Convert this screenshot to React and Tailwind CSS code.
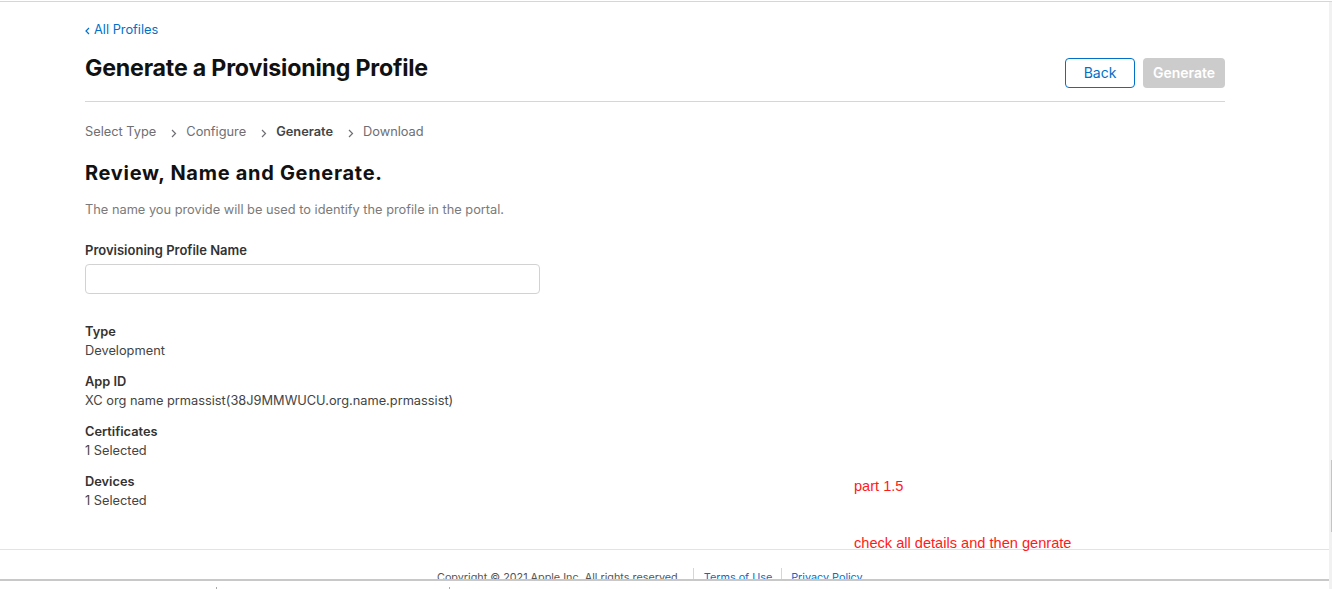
import React, { useState } from 'react';

const details = [
  { label: 'Type', value: 'Development' },
  { label: 'App ID', value: 'XC org name prmassist(38J9MMWUCU.org.name.prmassist)' },
  { label: 'Certificates', value: '1 Selected' },
  { label: 'Devices', value: '1 Selected' },
];

const steps = ['Select Type', 'Configure', 'Generate', 'Download'];

const Chevron = () => (
  <svg width="6" height="9" viewBox="0 0 6 9" className="ml-[15px] mr-[9px] mt-[3px]" fill="none">
    <path d="M1 1l3.5 3.5L1 8" stroke="#6e6e73" strokeWidth="1.2" />
  </svg>
);

const App = () => {
  const [name, setName] = useState('');

  return (
    <div className="w-[1332px] h-[589px] overflow-hidden bg-white relative font-['Inter',sans-serif]">
      <div className="h-px bg-white" />
      <div className="h-px bg-[#d6d6d6]" />
      <div className="flex h-[587px]">
        <div className="flex-1 flex flex-col">
          {/* main content */}
          <div className="h-[548px] pl-[85px]">
            <div className="w-[1140px]">
              <a href="#" className="mt-[19px] flex items-center text-[12.8px] leading-[18px] text-[#0070c9]">
                <svg width="5" height="8" viewBox="0 0 5 8" className="mr-[4px] mt-px" fill="none">
                  <path d="M4 1L1 4l3 3" stroke="#0070c9" strokeWidth="1.2" />
                </svg>
                All Profiles
              </a>

              <div className="mt-[13px] flex justify-between items-start h-[35px]">
                <h1 className="text-[23.2px] leading-[32px] font-bold text-[#111] tracking-[-0.2px]">
                  Generate a Provisioning Profile
                </h1>
                <div className="flex gap-[8px] mt-[6px]">
                  <button className="w-[70px] h-[30px] rounded-[4px] border border-[#0070c9] text-[#0070c9] text-[14px] leading-[26px]">
                    Back
                  </button>
                  <button
                    disabled
                    className="w-[82px] h-[30px] rounded-[4px] bg-[#cccccc] text-white text-[14px] leading-[26px] font-semibold"
                  >
                    Generate
                  </button>
                </div>
              </div>

              <div className="mt-[14px] h-px bg-[#d6d6d6]" />

              <div className="mt-[21px] flex items-center text-[12.8px] leading-[18px] text-[#6e6e73]">
                {steps.map((s, i) => (
                  <React.Fragment key={s}>
                    {i > 0 && <Chevron />}
                    <span className={s === 'Generate' ? 'font-semibold text-[#444]' : ''}>{s}</span>
                  </React.Fragment>
                ))}
              </div>

              <h2 className="mt-[18px] text-[20px] leading-[28px] font-bold text-[#111] tracking-[0.7px]">
                Review, Name and Generate.
              </h2>

              <p className="mt-[14px] text-[12.8px] leading-[18px] text-[#7a7a7a]">
                The name you provide will be used to identify the profile in the portal.
              </p>

              <label htmlFor="profile-name" className="mt-[22px] block text-[13px] leading-[18px] font-semibold text-[#333]">
                Provisioning Profile Name
              </label>
              <input
                id="profile-name"
                type="text"
                value={name}
                onChange={(e) => setName(e.target.value)}
                className="mt-[5px] block w-[455px] h-[30px] rounded-[4px] border border-[#d2d2d2] px-[8px] text-[13px] outline-none"
              />

              <div className="mt-[28px] flex flex-col gap-[12px]">
                {details.map((d) => (
                  <div key={d.label} className="text-[12.8px] leading-[19px]">
                    <div className="font-semibold text-[#333]">{d.label}</div>
                    <div className="text-[#444]">{d.value}</div>
                  </div>
                ))}
              </div>
            </div>
          </div>

          {/* footer */}
          <div className="h-px bg-[#e3e3e3]" />
          <div className="h-[29px] overflow-hidden">
            <div className="pt-[20px] pl-[437px] flex items-start text-[10.8px] leading-[16px]">
              <span className="text-[#555]">Copyright © 2021 Apple Inc. All rights reserved.</span>
              <span className="ml-[12px] mr-[10px] w-px h-[16px] -mt-[2px] bg-[#d6d6d6]" />
              <a href="#" className="text-[#0070c9]">Terms of Use</a>
              <span className="ml-[9px] mr-[9px] w-px h-[16px] -mt-[2px] bg-[#d6d6d6]" />
              <a href="#" className="text-[#0070c9]">Privacy Policy</a>
            </div>
          </div>
          <div className="h-[2px] bg-[#c8c8c8]" />
          <div className="flex pt-[6px]">
            <span className="ml-[216px] w-px h-[2px] bg-[#aaa]" />
            <span className="ml-[232px] w-px h-[2px] bg-[#aaa]" />
          </div>
        </div>

        {/* scrollbar strip */}
        <div className="w-[3px] bg-[#f1f1f1] flex flex-col">
          <div className="h-[458px]" />
          <div className="ml-auto w-px h-[72px] bg-[#c4c4c4]" />
        </div>
      </div>

      {/* annotations */}
      <div className="absolute left-[854px] top-[477px] font-['Liberation_Sans',sans-serif] text-[14.6px] leading-[18px] text-[#ff1a1a]">
        part 1.5
      </div>
      <div className="absolute left-[854px] top-[534px] font-['Liberation_Sans',sans-serif] text-[14.6px] leading-[18px] text-[#ff1a1a]">
        check all details and then genrate
      </div>
    </div>
  );
};

export default App;
